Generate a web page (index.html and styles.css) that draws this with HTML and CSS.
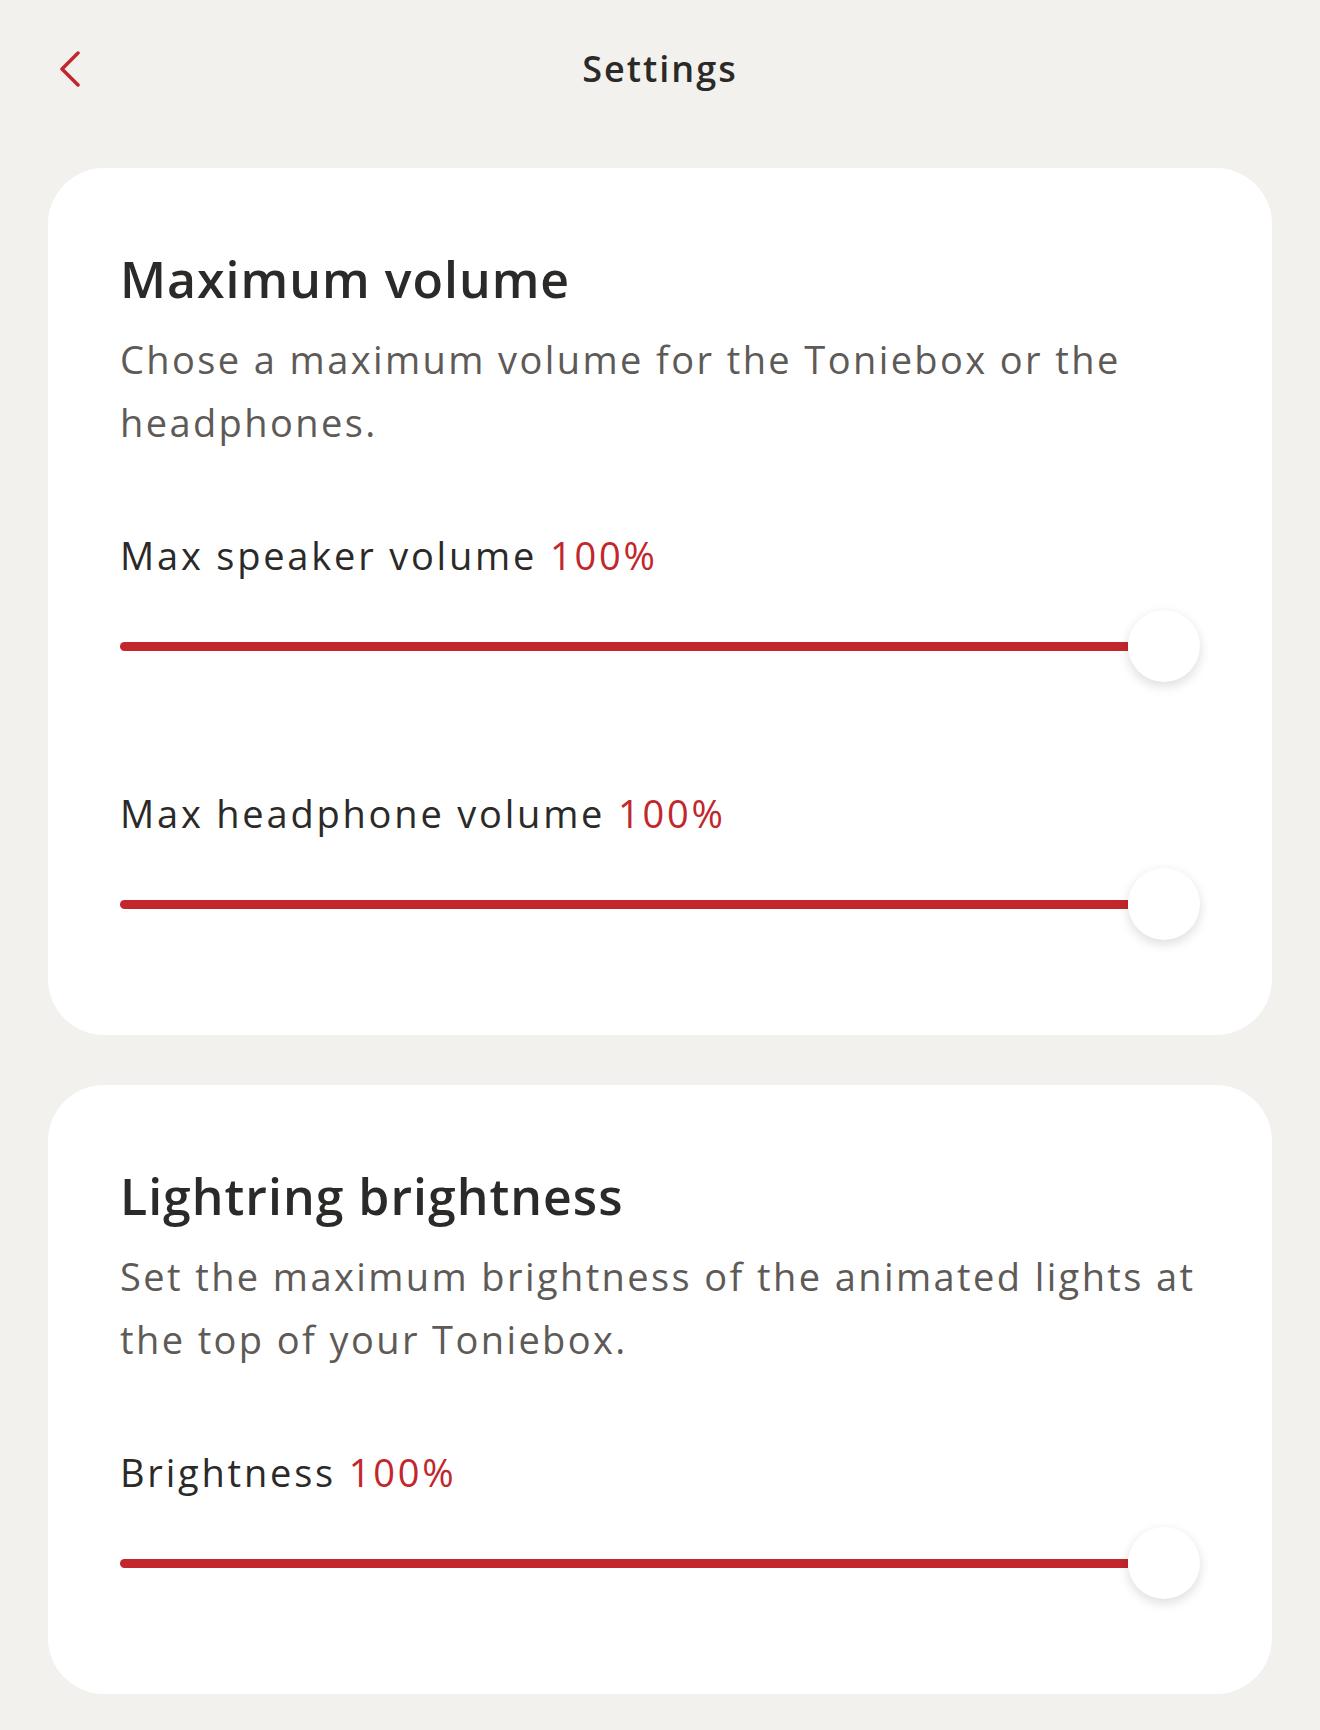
FILE: index.html
```html
<!DOCTYPE html>
<html lang="en">
<head>
<meta charset="UTF-8" />
<title>Settings</title>
<link rel="stylesheet" href="styles.css">
</head>
<body>

<header class="topbar">
  <a class="back" href="#" aria-label="Back">
    <svg width="24" height="36" viewBox="0 0 24 36">
      <path d="M20 2 L4 18 L20 34" fill="none" stroke="#c1272d" stroke-width="3.5" stroke-linecap="round" stroke-linejoin="round"/>
    </svg>
  </a>
  <h1 class="title">Settings</h1>
  <span></span>
</header>

<main class="cards">
  <section class="card">
    <h2 class="card-title">Maximum volume</h2>
    <p class="card-desc">Chose a maximum volume for the Toniebox or the headphones.</p>

    <div class="setting">
      <p class="setting-label">Max speaker volume <span class="value">100%</span></p>
      <div class="slider" role="slider" aria-valuenow="100">
        <div class="track"></div>
        <div class="thumb"></div>
      </div>
    </div>

    <div class="setting">
      <p class="setting-label">Max headphone volume <span class="value">100%</span></p>
      <div class="slider" role="slider" aria-valuenow="100">
        <div class="track"></div>
        <div class="thumb"></div>
      </div>
    </div>
  </section>

  <section class="card">
    <h2 class="card-title">Lightring brightness</h2>
    <p class="card-desc">Set the maximum brightness of the animated lights at the top of your Toniebox.</p>

    <div class="setting">
      <p class="setting-label">Brightness <span class="value">100%</span></p>
      <div class="slider" role="slider" aria-valuenow="100">
        <div class="track"></div>
        <div class="thumb"></div>
      </div>
    </div>
  </section>
</main>

</body>
</html>
```

FILE: styles.css
```css
body {
  margin: 0;
  background: #f2f1ee;
  font-family: "Open Sans", "Liberation Sans", sans-serif;
  color: #2b2a29;
}
.topbar {
  display: grid;
  grid-template-columns: 1fr auto 1fr;
  align-items: center;
  padding-top: 41px;
  height: 56px;
}
.back {
  display: flex;
  padding-left: 58px;
}
.title {
  margin: 0;
  font-size: 36px;
  line-height: 56px;
  font-weight: 600;
  letter-spacing: 2px;
}
.cards {
  display: flex;
  flex-direction: column;
  gap: 50px;
  padding: 71px 48px 36px;
}
.card {
  background: #fff;
  border-radius: 56px;
  padding: 81px 72px 95px;
}
.card-title {
  margin: 0;
  font-size: 50px;
  line-height: 60px;
  font-weight: 600;
  letter-spacing: 1px;
}
.card-desc {
  margin: 19px 0 0;
  font-size: 38px;
  line-height: 63px;
  letter-spacing: 2.4px;
  color: #5d5a57;
}
.setting {
  margin-top: 106px;
}
.card-desc + .setting {
  margin-top: 76px;
}
.setting-label {
  margin: 0;
  font-size: 38px;
  line-height: 50px;
  letter-spacing: 2.8px;
}
.value {
  color: #c1272d;
}
.slider {
  display: flex;
  align-items: center;
  height: 72px;
  margin-top: 30px;
}
.track {
  flex: 1;
  height: 9px;
  background: #c1272d;
  border-radius: 5px 0 0 5px;
}
.thumb {
  width: 72px;
  height: 72px;
  border-radius: 50%;
  background: #fff;
  box-shadow: 0 4px 12px rgb(0 0 0 / 0.14);
}
```
